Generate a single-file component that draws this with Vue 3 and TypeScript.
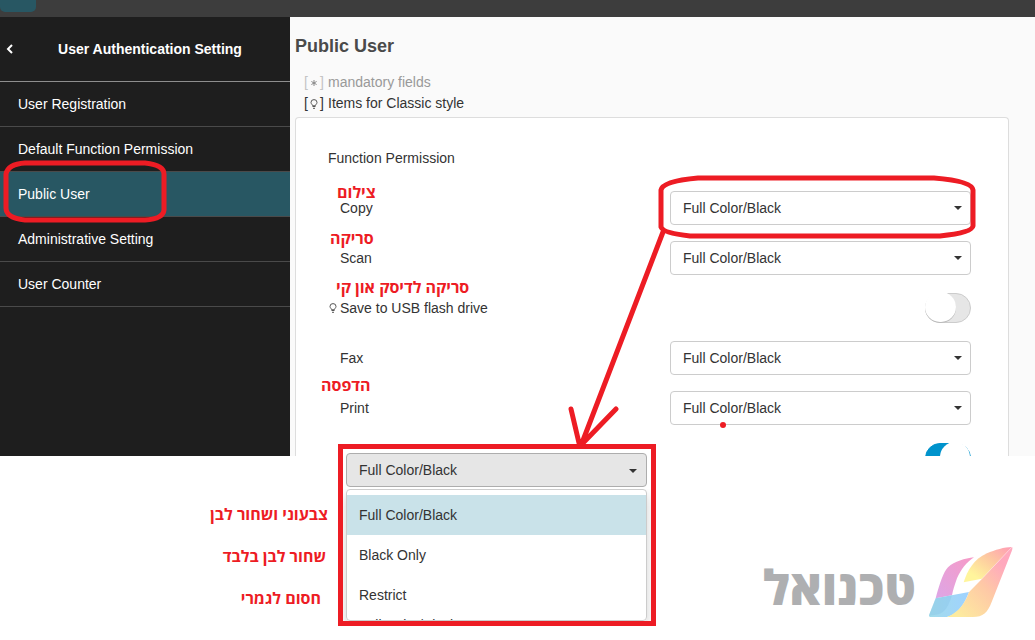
<script setup lang="ts">
import { ref } from 'vue'

interface MenuItem {
  label: string
  active?: boolean
}

interface Permission {
  id: string
  label: string
  kind: 'select' | 'switch'
  note?: string
  noteClass?: string
  classic?: boolean
  ringed?: boolean
}

const menu: MenuItem[] = [
  { label: 'User Registration' },
  { label: 'Default Function Permission' },
  { label: 'Public User', active: true },
  { label: 'Administrative Setting' },
  { label: 'User Counter' },
]

const permissions: Permission[] = [
  { id: 'copy', label: 'Copy', kind: 'select', note: 'צילום', noteClass: 'note-copy', ringed: true },
  { id: 'scan', label: 'Scan', kind: 'select', note: 'סריקה', noteClass: 'note-scan' },
  { id: 'usb', label: 'Save to USB flash drive', kind: 'switch', note: 'סריקה לדיסק און קי', noteClass: 'note-usb', classic: true },
  { id: 'fax', label: 'Fax', kind: 'select' },
  { id: 'print', label: 'Print', kind: 'select', note: 'הדפסה', noteClass: 'note-print' },
]

const options = ['Full Color/Black', 'Black Only', 'Restrict']
const optionNotes = ['צבעוני ושחור לבן', 'שחור לבן בלבד', 'חסום לגמרי']

const values = ref<Record<string, string>>({
  copy: options[0],
  scan: options[0],
  fax: options[0],
  print: options[0],
})
const usbEnabled = ref(false)
const nextEnabled = ref(true)
const picked = ref(options[0])
</script>

<template>
  <div class="page">
    <header class="topbar"><span class="tab"></span></header>

    <div class="body">
      <aside class="sidebar">
        <div class="side-head">
          <button class="back" type="button" aria-label="Back">
            <svg width="8" height="12" viewBox="0 0 8 12"><path d="M6 2 L2 6 L6 10" fill="none" stroke="#fff" stroke-width="2" /></svg>
          </button>
          <h2>User Authentication Setting</h2>
        </div>
        <nav>
          <a v-for="item in menu" :key="item.label" href="#" class="side-item" :class="{ active: item.active }">
            {{ item.label }}
            <svg v-if="item.active" class="ring ring-menu" viewBox="0 0 164 63" aria-hidden="true">
              <path d="M22 3 H142 Q161 5 161 14 V50 Q160 59 142 60 H22 Q3 58 3 48 V14 Q5 4 22 3 Z" />
            </svg>
          </a>
        </nav>
      </aside>

      <main class="content">
        <h1>Public User</h1>
        <p class="legend muted">
          <span class="mark"><i>[</i>
            <svg class="star" viewBox="0 0 8 10"><path d="M4 2 V8 M1.4 3.5 L6.6 6.5 M6.6 3.5 L1.4 6.5" /></svg>
            <i>]</i></span>mandatory fields
        </p>
        <p class="legend">
          <span class="mark"><i>[</i>
            <svg class="bulb" viewBox="0 0 8 10"><path d="M2.8 6.8 C2.6 5.6 1 5 1 3.4 A3 2.8 0 0 1 7 3.4 C7 5 5.4 5.6 5.2 6.8 Z M2.5 7.5 H5.5 M3 9.3 H5" /></svg>
            <i>]</i></span>Items for Classic style
        </p>

        <section class="panel">
          <h3>Function Permission</h3>
          <div v-for="p in permissions" :key="p.id" class="row">
            <span v-if="p.note" class="note" :class="p.noteClass" dir="rtl" lang="he">{{ p.note }}</span>
            <label :for="p.id">
              <svg v-if="p.classic" class="bulb" viewBox="0 0 8 10"><path d="M2.8 6.8 C2.6 5.6 1 5 1 3.4 A3 2.8 0 0 1 7 3.4 C7 5 5.4 5.6 5.2 6.8 Z M2.5 7.5 H5.5 M3 9.3 H5" /></svg>
              {{ p.label }}
            </label>
            <div v-if="p.kind === 'select'" class="select">
              <select :id="p.id" v-model="values[p.id]">
                <option v-for="o in options" :key="o">{{ o }}</option>
              </select>
              <span class="caret"></span>
              <svg v-if="p.ringed" class="ring ring-select" viewBox="0 0 320 64" aria-hidden="true">
                <path d="M40 3 H276 Q314 6 315 15 V51 Q314 58 282 61 H32 Q5 58 3 52 V15 Q5 6 40 3 Z" />
              </svg>
            </div>
            <input v-else :id="p.id" v-model="usbEnabled" class="switch" type="checkbox" />
          </div>
          <div class="row cut">
            <input v-model="nextEnabled" class="switch" type="checkbox" aria-label="Enabled" />
          </div>
        </section>
      </main>

      <svg class="arrow" viewBox="0 0 160 218" aria-hidden="true">
        <path d="M95 2 L14 213 M3 179 L11 213 M48 179 L15 213" />
        <circle cx="155" cy="195" r="3" />
      </svg>
    </div>

    <section class="detail">
      <ul class="option-notes" dir="rtl" lang="he">
        <li v-for="n in optionNotes" :key="n">{{ n }}</li>
      </ul>
      <div class="frame">
        <button class="open" type="button" aria-haspopup="listbox" aria-expanded="true">{{ picked }}<span class="caret"></span></button>
        <div class="list" role="listbox" aria-label="Permission">
          <button v-for="o in options" :key="o" class="option" type="button" role="option" :aria-selected="o === picked" :class="{ on: o === picked }" @click="picked = o">{{ o }}</button>
        </div>
        <div class="behind" aria-hidden="true">{{ options[0] }}</div>
      </div>
      <div class="brand">
        <span class="brand-name" lang="he" dir="rtl">טכנואל</span>
        <svg class="brand-mark" viewBox="565 48 255 216" aria-hidden="true">
          <defs>
            <linearGradient id="pink" x1="0" y1="1" x2="1" y2="0"><stop offset="0" stop-color="#dda6e6" /><stop offset="1" stop-color="#f79ac6" /></linearGradient>
            <linearGradient id="blue"><stop offset="0" stop-color="#a3dcea" /><stop offset="1" stop-color="#9fd2ff" /></linearGradient>
            <linearGradient id="gold" x1="0" y1="1" x2="1" y2="0"><stop offset="0.2" stop-color="#fff59c" /><stop offset="0.6" stop-color="#fdc9a0" /><stop offset="1" stop-color="#ff9bb5" /></linearGradient>
            <linearGradient id="coral" x1="0" y1="1" x2="1" y2="0"><stop offset="0.1" stop-color="#fdeb9f" /><stop offset="0.5" stop-color="#fec9a6" /><stop offset="0.8" stop-color="#ffa8bd" /></linearGradient>
          </defs>
          <path fill="url(#pink)" d="M588 205 C600 160 612 125 625 112 C645 93 675 86 703 82 C680 98 664 118 652 145 C645 165 640 180 637 196 Z" />
          <path fill="url(#blue)" d="M568 256 L588 205 L688 186 C676 218 658 252 622 261 H572 Q567 261 568 256 Z" />
          <path fill="#82bde3" opacity=".3" d="M588 205 L637 196 C628 224 618 247 596 253 Q580 257 568 256 Z" />
          <path fill="url(#gold)" d="M672 157 C684 120 702 88 742 70 C765 60 795 51 817 51 L727 146 Z" />
          <path fill="url(#coral)" d="M817 51 Q820 54 816 64 L756 216 C744 248 730 261 700 261 H622 C660 246 678 215 688 186 L727 146 Z" />
          <path d="M817 51 L727 146 L688 186" fill="none" stroke="#fff" stroke-opacity=".4" stroke-width="2" />
        </svg>
      </div>
    </section>
  </div>
</template>

<style>
body {
  margin: 0;
  background: #fff;
}
</style>

<style scoped>
* {
  box-sizing: border-box;
}
.page {
  font: 14px/20px "Liberation Sans", Arial, sans-serif;
  color: #333;
}
.topbar {
  display: flex;
  height: 17px;
  background: #3d3d3d;
}
.tab {
  width: 36px;
  height: 12px;
  border-radius: 0 0 5px 5px;
  background: #285763;
}
.body {
  position: relative;
  display: flex;
}
.sidebar {
  flex: 0 0 290px;
  background: #1e1e1e;
  color: #fff;
}
.side-head {
  display: flex;
  align-items: center;
  height: 65px;
  border-bottom: 1px solid #8e8e8e;
}
.back {
  display: flex;
  padding: 0;
  margin-left: 6px;
  border: 0;
  background: none;
}
.side-head h2 {
  flex: 1;
  margin: 0;
  font-size: 14px;
  line-height: 20px;
  text-align: center;
  padding-right: 4px;
}
.side-item {
  position: relative;
  display: block;
  padding: 12px 18px;
  border-bottom: 1px solid #4a4a4a;
  color: #fff;
  text-decoration: none;
}
.side-item.active {
  background: #285763;
}
.ring,
.arrow {
  position: absolute;
  z-index: 3;
  pointer-events: none;
}
.ring path,
.arrow path {
  fill: none;
  stroke: #ed1c24;
  stroke-width: 5;
  stroke-linecap: round;
  stroke-linejoin: round;
}
.arrow circle {
  fill: #ed1c24;
}
.ring-menu {
  top: -12px;
  left: 3px;
  width: 164px;
  height: 63px;
}
.ring-select {
  top: -16px;
  left: -12px;
  width: 320px;
  height: 64px;
}
.arrow {
  top: 213px;
  left: 568px;
  width: 160px;
  height: 218px;
}
.content {
  flex: 1;
  padding: 17px 26px 0 5px;
  background: #fafafa;
}
h1 {
  margin: 0 0 14px;
  font-size: 18px;
  line-height: 24px;
  color: #4a4a4a;
}
.legend {
  display: flex;
  margin: 0;
  padding-left: 9px;
  line-height: 21px;
}
.legend.muted {
  color: #999;
}
.mark {
  display: flex;
  align-items: center;
  justify-content: space-between;
  width: 20px;
  margin-right: 4px;
}
.mark i {
  font-style: normal;
}
.muted .mark i {
  color: #c4c4c4;
}
.bulb,
.star {
  width: 8px;
  height: 10px;
  fill: none;
  stroke: #555;
}
.star {
  stroke: #888;
}
.panel {
  margin-top: 3px;
  padding: 15px 37px 0 32px;
  border: 1px solid #ddd;
  border-bottom: 0;
  border-radius: 4px 4px 0 0;
  background: #fff;
}
h3 {
  margin: 0;
  font-size: 14px;
  font-weight: normal;
  line-height: 50px;
}
.row {
  position: relative;
  display: flex;
  align-items: center;
  justify-content: space-between;
  height: 50px;
}
.row label {
  display: flex;
  align-items: center;
  gap: 3px;
  padding-left: 12px;
  line-height: 16px;
}
.row label:has(.bulb) {
  padding-left: 1px;
}
.row.cut {
  align-items: flex-start;
  justify-content: flex-end;
  height: 23px;
  padding-top: 10px;
  overflow: hidden;
}
.note {
  position: absolute;
  z-index: 2;
  color: #ed1c24;
  font: bold 16px/16px "Open Sans", "Liberation Sans", sans-serif;
  white-space: nowrap;
}
.note-copy {
  top: 1px;
  left: 9px;
}
.note-scan {
  top: -3px;
  left: 2px;
}
.note-usb {
  top: -4px;
  left: 8px;
}
.note-print {
  top: -6px;
  left: -7px;
}
.select {
  position: relative;
  width: 301px;
}
select,
.open {
  display: block;
  width: 100%;
  height: 34px;
  padding: 0 12px;
  border: 1px solid #ccc;
  border-radius: 4px;
  background: #fff;
  color: #333;
  font: inherit;
  text-align: left;
  appearance: none;
}
.caret {
  position: absolute;
  top: 15px;
  right: 9px;
  border: 4px solid transparent;
  border-top-color: #333;
  border-bottom: 0;
}
.switch {
  appearance: none;
  position: relative;
  flex: none;
  width: 46px;
  height: 30px;
  margin: 0;
  border: 1px solid #ccc;
  border-radius: 15px;
  background: #e6e6e6;
}
.switch::before {
  content: "";
  position: absolute;
  top: -2px;
  left: -1px;
  width: 31px;
  height: 30px;
  border-radius: 15px;
  background: #fff;
  box-shadow: 0 1px 0 #bbb;
}
.switch:checked {
  border-color: #0093cc;
  background: #0093cc;
}
.switch:checked::before {
  left: 14px;
  width: 30px;
  box-shadow: none;
}
.detail {
  position: relative;
  z-index: 2;
  display: flex;
  align-items: flex-start;
  margin-top: -12px;
  padding-right: 22px;
}
.option-notes {
  flex: 0 0 338px;
  margin: 0;
  padding: 60px 10px 0 0;
  list-style: none;
  color: #ed1c24;
  font: bold 16px/20px "Open Sans", "Liberation Sans", sans-serif;
}
.option-notes li {
  margin-bottom: 22px;
}
.option-notes li:nth-child(2) {
  padding-right: 2px;
}
.option-notes li:nth-child(3) {
  padding-right: 7px;
}
.frame {
  flex: 0 0 318px;
  padding: 4px 4px 0 3px;
  border: 5px solid #ed1c24;
  background: #fff;
}
.open {
  position: relative;
  border-color: #adadad;
  background: #e6e6e6;
}
.list {
  margin-top: 2px;
  padding: 5px 0;
  border: 1px solid #ccc;
  border-radius: 4px;
  box-shadow: 0 6px 12px rgba(0, 0, 0, 0.18);
  clip-path: inset(0 -4px 0 -3px);
}
.behind {
  height: 2px;
  margin-top: -2px;
  padding-left: 13px;
  line-height: 12px;
  overflow: hidden;
}
.option {
  display: block;
  width: 100%;
  height: 40px;
  padding: 0 12px;
  border: 0;
  background: #fff;
  color: #333;
  font: inherit;
  text-align: left;
}
.option.on {
  background: #c9e2e9;
}
.brand {
  display: flex;
  align-items: center;
  gap: 12px;
  margin: 102px 0 0 auto;
}
.brand-name {
  padding-top: 10px;
  color: #aeafb1;
  font: 800 48px/60px "Open Sans", "Liberation Sans", sans-serif;
}
.brand-mark {
  width: 85px;
  height: 72px;
}
</style>
